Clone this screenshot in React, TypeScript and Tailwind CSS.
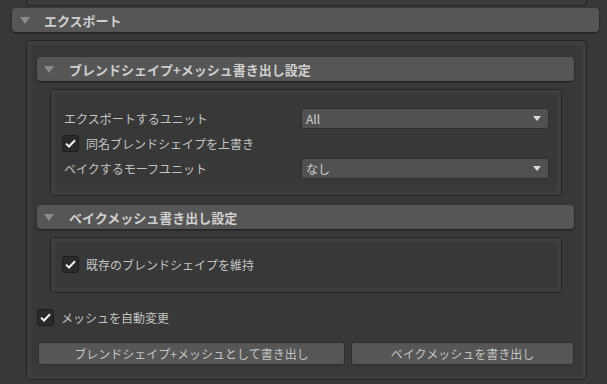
import React from 'react';

const font = { fontFamily: '"Noto Sans CJK JP", "Noto Sans", sans-serif' };

const Tri = ({ className }: { className?: string }) => (
  <svg width="10" height="7" viewBox="0 0 10 7" className={className}>
    <path d="M0 0 H10 L5 7 Z" fill="#8c8c8c" />
  </svg>
);

const Foldout = ({ label, className }: { label: string; className: string }) => (
  <div
    className={`flex h-[24px] items-center rounded-[4px] bg-[#565656] shadow-[0_1px_2px_rgba(0,0,0,0.55)] ${className}`}
  >
    <Tri className="ml-[7px] shrink-0" />
    <span className="ml-[15px] text-[13px] font-bold leading-none text-[#cfcfcf]">{label}</span>
  </div>
);

const Check = ({ label, className = '' }: { label: string; className?: string }) => (
  <div className={`flex h-[25px] items-center ${className}`}>
    <div className="flex h-[17px] w-[17px] shrink-0 items-center justify-center rounded-[3px] border border-[#1c1c1c] bg-[#2a2a2a]">
      <svg width="11" height="9" viewBox="0 0 11 9">
        <path d="M1 4.6 L4 7.5 L10 1.2" fill="none" stroke="#f2f2f2" strokeWidth="2" />
      </svg>
    </div>
    <span className="ml-[7px] text-[12px] leading-none text-[#c4c4c4]">{label}</span>
  </div>
);

const Dropdown = ({ value }: { value: string }) => (
  <div className="flex h-[21px] w-[248px] items-center justify-between rounded-[3px] border border-[#2e2e2e] bg-[#515151] pl-[4px] pr-[7px]">
    <span className="text-[12px] leading-none text-[#d2d2d2]">{value}</span>
    <svg width="8" height="5" viewBox="0 0 8 5">
      <path d="M0 0 H8 L4 5 Z" fill="#dcdcdc" />
    </svg>
  </div>
);

const Group = ({ children, className }: { children: React.ReactNode; className: string }) => (
  <div className={`rounded-[3px] border border-[#242424] bg-[#3e3e3e] p-[4px] ${className}`}>
    <div className="bg-[#383838]">{children}</div>
  </div>
);

export default function App() {
  return (
    <div style={font} className="h-[384px] w-[607px] overflow-hidden bg-[#383838] pl-[12px] pr-[8px]">
      <div className="ml-[14px] mr-[12px] h-[6px] rounded-b-[3px] border-x border-b border-[#232323] bg-[#3c3c3c]" />
      <Foldout label="エクスポート" className="mt-[2px] [&>svg]:ml-[8px] [&>span]:ml-[14px]" />

      <Group className="ml-[14px] mr-[12px] mt-[8px]">
        <div className="pb-[10px] pt-[12px]">
          <Foldout label="ブレンドシェイプ+メッシュ書き出し設定" className="ml-[6px] mr-[8px] h-[23px]" />

          <Group className="ml-[19px] mr-[20px] mt-[8px]">
            <div className="pb-[10px] pl-[9px] pr-[8px] pt-[12px]">
              <div className="flex h-[25px] items-center">
                <span className="w-[237px] text-[12px] leading-none text-[#c4c4c4]">エクスポートするユニット</span>
                <Dropdown value="All" />
              </div>
              <Check label="同名ブレンドシェイプを上書き" className="-ml-[2px]" />
              <div className="flex h-[25px] items-center">
                <span className="w-[237px] text-[12px] leading-none text-[#c4c4c4]">ベイクするモーフユニット</span>
                <Dropdown value="なし" />
              </div>
            </div>
          </Group>

          <Foldout label="ベイクメッシュ書き出し設定" className="ml-[6px] mr-[8px] mt-[9px]" />

          <Group className="ml-[19px] mr-[20px] mt-[8px]">
            <div className="pb-[11px] pl-[7px] pt-[10px]">
              <Check label="既存のブレンドシェイプを維持" />
            </div>
          </Group>

          <Check label="メッシュを自動変更" className="ml-[6px] mt-[12px]" />

          <div className="ml-[7px] mr-[8px] mt-[12px] flex gap-[6px]">
            <div className="flex h-[23px] w-[307px] items-center justify-center rounded-[3px] border border-[#2e2e2e] bg-[#565656] text-[12px] leading-none text-[#c4c4c4]">
              ブレンドシェイプ+メッシュとして書き出し
            </div>
            <div className="flex h-[23px] flex-1 items-center justify-center rounded-[3px] border border-[#2e2e2e] bg-[#565656] text-[12px] leading-none text-[#c4c4c4]">
              ベイクメッシュを書き出し
            </div>
          </div>
        </div>
      </Group>
    </div>
  );
}
